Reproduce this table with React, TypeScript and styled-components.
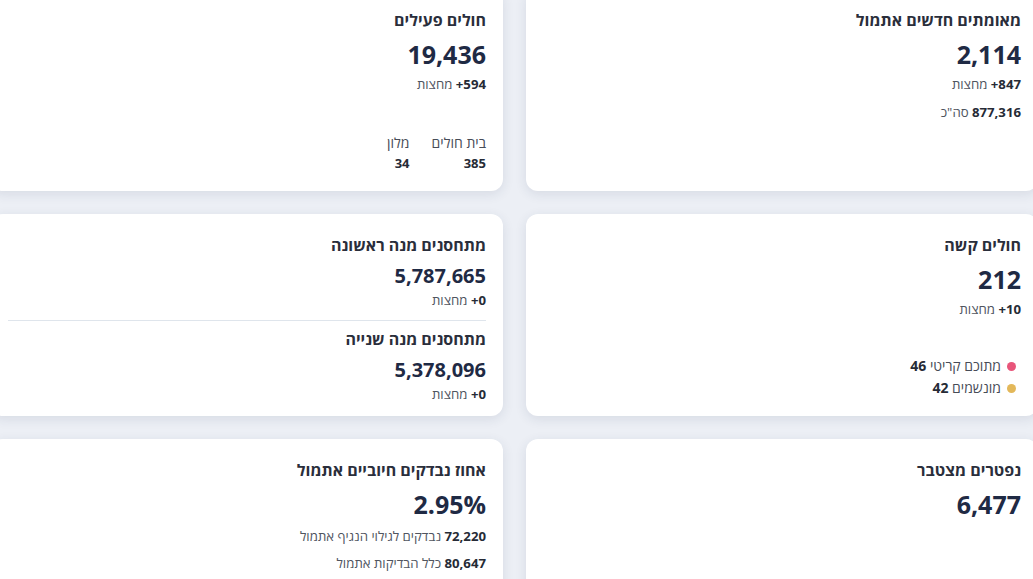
import React from "react";
import styled, { createGlobalStyle } from "styled-components";

const GlobalStyle = createGlobalStyle`
  html, body {
    margin: 0;
    padding: 0;
    background: #eceff5;
    font-family: "Open Sans", "Noto Sans", "DejaVu Sans", sans-serif;
  }
`;

const Page = styled.div`
  direction: rtl;
  width: 100vw;
  height: 100vh;
  overflow: hidden;
  background: #eceff5;
`;

const Grid = styled.div`
  display: grid;
  width: 1047px;
  grid-template-columns: 512px 512px;
  grid-auto-rows: 202px;
  gap: 23px;
  margin-right: -5px;
  margin-top: -11px;
`;

const Card = styled.div`
  background: #ffffff;
  border-radius: 12px;
  box-shadow: 0 3px 12px rgba(40, 52, 90, 0.11);
  padding: 20px 17px 17px;
  display: flex;
  flex-direction: column;
  align-items: stretch;
  text-align: right;
`;

const Title = styled.div<{ $gap?: number }>`
  font-size: 16px;
  line-height: 22px;
  font-weight: 700;
  color: #2a2e3b;
  margin-top: ${(p) => p.$gap ?? 0}px;
`;

const BigNum = styled.div<{ $small?: boolean }>`
  font-size: ${(p) => (p.$small ? "20px" : "25px")};
  line-height: ${(p) => (p.$small ? "28px" : "34px")};
  font-weight: 700;
  color: #1f2a44;
  margin-top: 6px;
`;

const Sub = styled.div<{ $gap?: number }>`
  font-size: 13.2px;
  line-height: 20px;
  color: #50555f;
  margin-top: ${(p) => p.$gap ?? 3}px;

  b {
    font-weight: 700;
    color: #262b36;
  }
`;

const Divider = styled.div`
  height: 1px;
  flex: none;
  background: #dfe5ec;
  margin-top: 10px;
`;

const Columns = styled.div`
  margin-top: auto;
  display: flex;
  gap: 22px;
`;

const Col = styled.div`
  display: flex;
  flex-direction: column;
  font-size: 14px;
  line-height: 21px;
  color: #474c57;

  b {
    font-size: 13px;
    font-weight: 700;
    color: #262b36;
  }
`;

const Legend = styled.div`
  margin-top: auto;
  display: flex;
  flex-direction: column;
  padding-right: 5px;
`;

const LegendRow = styled.div`
  display: flex;
  align-items: center;
  gap: 6px;
  font-size: 14px;
  line-height: 22px;
  color: #474c57;

  b {
    font-weight: 700;
    color: #262b36;
  }
`;

const Dot = styled.span<{ $color: string }>`
  width: 9px;
  height: 9px;
  border-radius: 50%;
  background: ${(p) => p.$color};
  flex: none;
`;

const Ltr = ({ children }: { children: React.ReactNode }) => (
  <bdi dir="ltr">
    <b>{children}</b>
  </bdi>
);

export default function App() {
  return (
    <Page>
      <GlobalStyle />
      <Grid>
        <Card>
          <Title>מאומתים חדשים אתמול</Title>
          <BigNum>2,114</BigNum>
          <Sub>
            <Ltr>+847</Ltr> מחצות
          </Sub>
          <Sub $gap={8}>
            <Ltr>877,316</Ltr> סה"כ
          </Sub>
        </Card>

        <Card>
          <Title>חולים פעילים</Title>
          <BigNum>19,436</BigNum>
          <Sub>
            <Ltr>+594</Ltr> מחצות
          </Sub>
          <Columns>
            <Col>
              <span>בית חולים</span>
              <b>385</b>
            </Col>
            <Col>
              <span>מלון</span>
              <b>34</b>
            </Col>
          </Columns>
        </Card>

        <Card>
          <Title>חולים קשה</Title>
          <BigNum>212</BigNum>
          <Sub>
            <Ltr>+10</Ltr> מחצות
          </Sub>
          <Legend>
            <LegendRow>
              <Dot $color="#e8557a" />
              <span>
                מתוכם קריטי <b>46</b>
              </span>
            </LegendRow>
            <LegendRow>
              <Dot $color="#e3b85a" />
              <span>
                מונשמים <b>42</b>
              </span>
            </LegendRow>
          </Legend>
        </Card>

        <Card>
          <Title>מתחסנים מנה ראשונה</Title>
          <BigNum $small>5,787,665</BigNum>
          <Sub $gap={0}>
            <Ltr>+0</Ltr> מחצות
          </Sub>
          <Divider />
          <Title $gap={7}>מתחסנים מנה שנייה</Title>
          <BigNum $small>5,378,096</BigNum>
          <Sub $gap={0}>
            <Ltr>+0</Ltr> מחצות
          </Sub>
        </Card>

        <Card>
          <Title>נפטרים מצטבר</Title>
          <BigNum>6,477</BigNum>
        </Card>

        <Card>
          <Title>אחוז נבדקים חיוביים אתמול</Title>
          <BigNum>2.95%</BigNum>
          <Sub $gap={5}>
            <Ltr>72,220</Ltr> נבדקים לגילוי הנגיף אתמול
          </Sub>
          <Sub $gap={7}>
            <Ltr>80,647</Ltr> כלל הבדיקות אתמול
          </Sub>
        </Card>
      </Grid>
    </Page>
  );
}
